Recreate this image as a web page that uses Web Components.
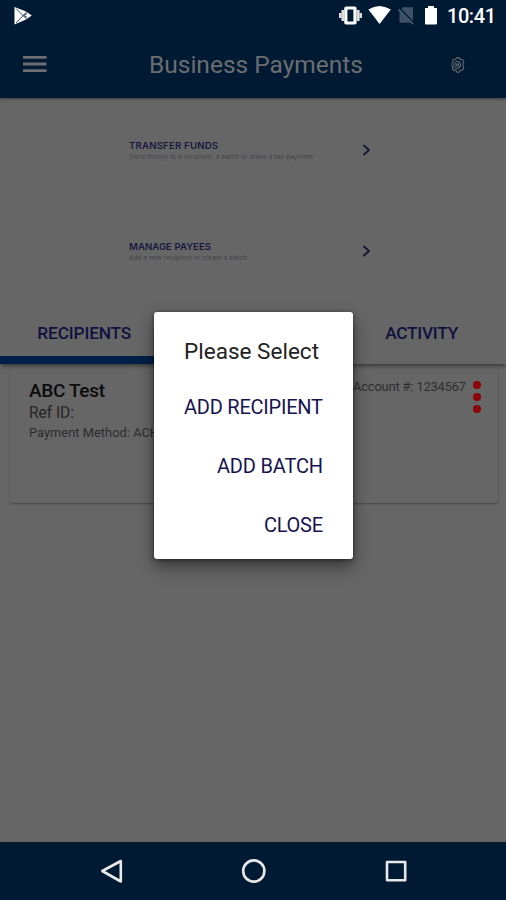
<!DOCTYPE html>
<html lang="en">
<head>
<meta charset="utf-8">
<title>Business Payments</title>
<style>
html,body{margin:0;height:900px;overflow:hidden;background:#666}
body{font-family:Roboto,"Noto Sans",sans-serif}
</style>
</head>
<body>
<payments-app></payments-app>
<script>
function define(name, html, after) {
  const t = document.createElement('template');
  t.innerHTML = html;
  customElements.define(name, class extends HTMLElement {
    connectedCallback() {
      if (this.shadowRoot) return;
      this.attachShadow({mode: 'open'}).append(t.content.cloneNode(true));
      if (after) after(this);
    }
  });
}

// A single line of text, tracked so that it fills the width attribute.
define('fit-text', `<style>
:host{display:block;white-space:nowrap;line-height:1}
span{display:inline-block}
</style><span><slot></slot></span>`, el => {
  const w = +el.getAttribute('width');
  const s = el.shadowRoot.querySelector('span');
  const n = el.textContent.length;
  const gap = (w - s.getBoundingClientRect().width) / (n - 1);
  s.style.letterSpacing = gap + 'px';
  s.style.marginRight = -gap + 'px';
});

define('status-bar', `<style>
:host{display:flex;height:32px;padding:0 10px 0 13px;align-items:center;justify-content:space-between;box-sizing:border-box;color:#fff}
.r{display:flex;align-items:center}
svg{display:block}
fit-text{font-size:20px;font-weight:500;margin-left:7px}
</style>
<svg width="21" height="20" viewBox="0 0 21 20"><path d="M1.5 1 13 5.5 18.8 9.5 13 13.5 1.5 18.5z" fill="#fff"/><path d="M3 2.5 13.5 13M3 17 13.5 6M11 9.5 14 7.5M11 9.5 14 11.5" stroke="#001a33" stroke-width=".8" fill="none"/></svg>
<div class="r">
<svg width="101" height="24" viewBox="340 4 101 24">
<rect x="345.2" y="6.5" width="12.4" height="18" rx="2" fill="#fff"/><rect x="348.4" y="9.5" width="6" height="12" fill="#001a33"/>
<path d="M343.9 10v11M359.1 10v11" stroke="#ddd" stroke-width="3"/><path d="M341.3 13v5M361.7 13v5" stroke="#ddd" stroke-width="2.6"/>
<path d="M369.4 9.5Q380.5 2.5 391.8 9.5L380.6 24z" fill="#fff"/>
<path d="M404 7.2h10v15.6h-13.5V10.5z" fill="#3d5066"/><path d="M400 8.5 414.7 24" stroke="#001a33" stroke-width="3"/><path d="M399.4 9.2 414 24" stroke="#53657a" stroke-width="1.4"/>
<path d="M426 8h3V6h6v2h3v15.5q0 1-1 1h-10q-1 0-1-1z" fill="#fff"/>
</svg>
<fit-text width="49">10:41</fit-text>
</div>`);

define('app-header', `<style>
:host{display:flex;height:66px;box-sizing:border-box;padding:0 40px 0 23px;align-items:center;color:#6c6d70}
svg{display:block}
.t{margin-left:102px;flex:1;font-size:24.5px;padding-top:1px}
.m{margin-bottom:2px}
</style>
<svg class="m" width="24" height="20" viewBox="0 0 24 20"><path d="M0 3.4h23.5M0 10h23.5M0 16.6h23.5" stroke="#6d6d70" stroke-width="2.8"/></svg>
<fit-text class="t" width="214">Business Payments</fit-text>
<svg width="17" height="18" viewBox="0 0 17 18"><g fill="none" stroke="#66696e" stroke-width="1.1" stroke-linejoin="round"><path d="M7 3.1 8 1.6h2.2l1 1.8 2.4.4 1.2 2-.8 1.7v2.8l.8 1.7-1.2 2-2.4.4-1 1.8H8l-1-1.8-2.4-.3-1.3-2 .9-1.8M7 3.1l-2.4.4-1.2 2 1 1.5"/><path d="M5.6 6.3Q8.4 4.6 10.7 6.5q1.7 2.4 0 4.8-2.4 2-5.2.4M2 8h5.2M2.2 10h4.4"/><circle cx="8.6" cy="9" r="1.1"/></g></svg>`);

define('action-row', `<style>
:host{display:flex;height:101px;box-sizing:border-box;padding:0 135px 0 129px;align-items:center;justify-content:space-between}
svg{display:block;margin-bottom:2px}
</style>
<div><slot></slot></div>
<svg width="9" height="12" viewBox="0 0 9 12"><path d="M1.5 1 7 6 1.5 11" fill="none" stroke="#121634" stroke-width="1.8"/></svg>`);

define('tab-item', `<style>
:host{display:flex;flex:1;height:56px;box-sizing:border-box;align-items:center;justify-content:center;font-size:17.3px;font-weight:500;color:#10113f;padding-top:2px;padding-bottom:7px}
:host([active]){border-bottom:8px solid #001f47;padding-bottom:0;padding-top:3px}
</style><slot></slot>`);

define('tab-bar', `<style>
:host{display:flex;height:56px;background:#666;box-shadow:0 3px 4px -1px #00000070;position:relative;width:506px}
</style><slot></slot>`);

define('recipient-card', `<style>
:host{display:flex;justify-content:space-between;margin:4px 8px 0 10px;height:135px;box-sizing:border-box;padding:13px 17px 0 19px;border-radius:3px;box-shadow:0 1px 2px #00000050}
.n{font-size:19px;font-weight:500;color:#0c0c0c}
.ref{font-size:15.6px;color:#252525;margin-top:6px}
.p{font-size:12.8px;color:#2c2c2c;margin-top:5px}
.r{display:flex;gap:7px}
.a{font-size:12.8px;color:#2e2e2e}
.d{display:flex;flex-direction:column;gap:4px}
i{width:8px;height:8px;border-radius:50%;background:#8c0508}
</style>
<div><fit-text class="n" width="76">ABC Test</fit-text><fit-text class="ref" width="45">Ref ID:</fit-text><fit-text class="p" width="130">Payment Method: ACH</fit-text></div>
<div class="r"><fit-text class="a" width="113">Account #: 1234567</fit-text><div class="d"><i></i><i></i><i></i></div></div>`);

define('select-dialog', `<style>
:host{position:absolute;left:154px;top:312px;width:199px;height:247px;box-sizing:border-box;background:#fff;border-radius:3px;box-shadow:0 8px 17px #00000070,0 1px 4px #00000080;display:flex;flex-direction:column;padding:28px 30px 0}
h2{margin:0 0 34px;font-size:22.5px;font-weight:400;color:#222}
.b{display:flex;flex-direction:column;align-items:flex-end;gap:39px;font-size:20px;color:#16134f}
</style>
<h2><fit-text width="135">Please Select</fit-text></h2>
<div class="b"><fit-text width="139">ADD RECIPIENT</fit-text><fit-text width="106">ADD BATCH</fit-text><fit-text width="59">CLOSE</fit-text></div>`);

define('nav-bar', `<style>
:host{display:block;height:58px;background:#001a33}
svg{display:block}
</style>
<svg width="506" height="58" viewBox="0 842 506 58" fill="none" stroke="#e8e8e8" stroke-width="2.6" stroke-linejoin="round"><path d="M102.3 871 120.8 861v20.5z"/><circle cx="253.8" cy="871" r="10.6"/><rect x="387" y="862" width="18.2" height="18.2"/></svg>`);

define('payments-app', `<style>
:host{display:flex;flex-direction:column;width:506px;height:900px;background:#666;position:relative;overflow:hidden}
.top{background:#001a33;height:98px;box-shadow:0 1px 3px #0006}
.acts{height:210px;padding-top:2px;box-sizing:border-box}
nav-bar{margin-top:auto}
.t{font-size:9.6px;font-weight:600;color:#17183f;font-family:Inter,sans-serif}
.s{font-size:6.3px;color:#434446;font-family:Inter,sans-serif;margin-top:3px}
</style>
<div class="top"><status-bar></status-bar><app-header></app-header></div>
<div class="acts">
<action-row><fit-text class="t" width="89">TRANSFER FUNDS</fit-text><fit-text class="s" width="184">Send money to a recipient, a batch or make a tax payment</fit-text></action-row>
<action-row><fit-text class="t" width="82">MANAGE PAYEES</fit-text><fit-text class="s" width="118">Add a new recipient or create a batch</fit-text></action-row>
</div>
<tab-bar><tab-item active><fit-text width="94">RECIPIENTS</fit-text></tab-item><tab-item></tab-item><tab-item><fit-text width="73">ACTIVITY</fit-text></tab-item></tab-bar>
<recipient-card></recipient-card>
<nav-bar></nav-bar>
<select-dialog></select-dialog>`);
</script>
</body>
</html>
